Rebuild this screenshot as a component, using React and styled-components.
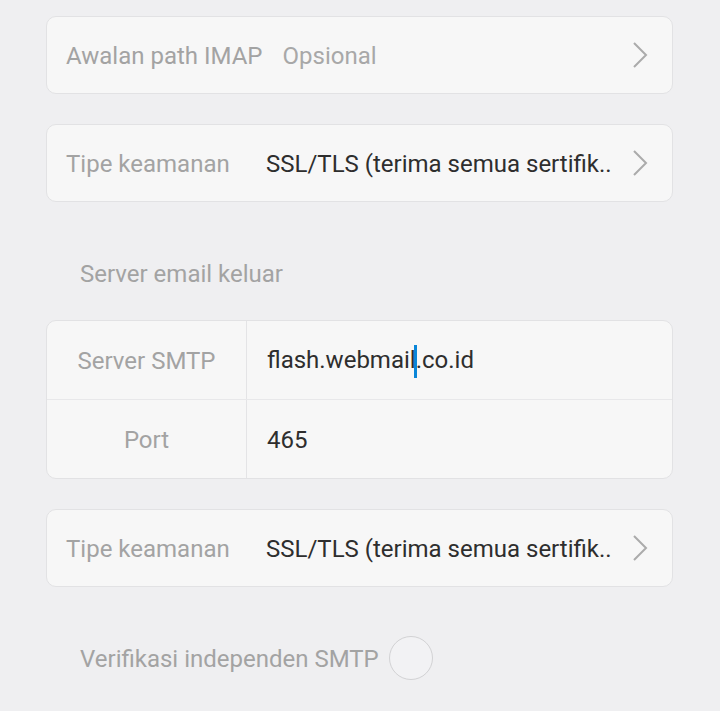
import React from "react";
import styled, { createGlobalStyle } from "styled-components";

const Global = createGlobalStyle`
  body {
    margin: 0;
    background: #efeff1;
    font-family: Roboto, "Liberation Sans", sans-serif;
  }
`;

const Page = styled.div`
  display: flex;
  flex-direction: column;
  padding: 16px 47px 0 46px;
  height: 711px;
  box-sizing: border-box;
  overflow: hidden;
`;

const Card = styled.div`
  background: #f7f7f7;
  border: 1px solid #e2e2e4;
  border-radius: 10px;
  margin-bottom: ${(p) => p.$mb || 0}px;
  overflow: hidden;
`;

const Row = styled.div`
  display: flex;
  align-items: center;
  height: 76px;
  padding: 0 24px 0 19px;
`;

const Label = styled.span`
  font-size: 24px;
  color: #a3a3a3;
  width: ${(p) => (p.$w ? `${p.$w}px` : "auto")};
  flex-shrink: 0;
  padding-top: 2px;
`;

const Placeholder = styled.span`
  font-size: 24px;
  color: #a8a8a8;
  margin-left: 20px;
  padding-top: 2px;
  flex: 1;
`;

const Value = styled.span`
  font-size: 24px;
  color: #2e2e2e;
  flex: 1;
  padding-top: 2px;
  white-space: nowrap;
`;

const Chevron = () => (
  <svg width="16" height="26" viewBox="0 0 16 26">
    <path d="M2 1 L14 13 L2 25" fill="none" stroke="#ababab" strokeWidth="2" />
  </svg>
);

const SectionTitle = styled.div`
  font-size: 24px;
  color: #a3a3a3;
  padding-left: 34px;
  line-height: 30px;
  margin: 57px 0 31px;
`;

const TableRow = styled.div`
  display: grid;
  grid-template-columns: 200px 1fr;
  height: 78px;
  border-top: ${(p) => (p.$first ? "none" : "1px solid #e8e8ea")};
`;

const Cell = styled.div`
  display: flex;
  align-items: center;
  justify-content: ${(p) => (p.$center ? "center" : "flex-start")};
  padding-left: ${(p) => (p.$center ? 0 : 20)}px;
  padding-top: 2px;
  border-right: ${(p) => (p.$center ? "1px solid #e4e4e6" : "none")};
  font-size: 24px;
  color: ${(p) => (p.$center ? "#a3a3a3" : "#2e2e2e")};
`;

const Caret = styled.span`
  display: inline-block;
  width: 3px;
  height: 33px;
  background: #0a86d8;
  vertical-align: middle;
  margin: 0 -1px 0 -2px;
`;

const ToggleRow = styled.div`
  display: flex;
  align-items: center;
  gap: 10px;
  padding-left: 34px;
  margin-top: 49px;
`;

const Radio = styled.div`
  width: 42px;
  height: 42px;
  border-radius: 50%;
  border: 1px solid #d2d2d4;
  background: #f2f2f4;
`;

export default function App() {
  return (
    <>
      <Global />
      <Page>
        <Card $mb={30}>
          <Row>
            <Label>Awalan path IMAP</Label>
            <Placeholder>Opsional</Placeholder>
            <Chevron />
          </Row>
        </Card>
        <Card>
          <Row>
            <Label $w={200}>Tipe keamanan</Label>
            <Value>SSL/TLS (terima semua sertifik..</Value>
            <Chevron />
          </Row>
        </Card>
        <SectionTitle>Server email keluar</SectionTitle>
        <Card $mb={30}>
          <TableRow $first>
            <Cell $center>Server SMTP</Cell>
            <Cell>
              <span>
                flash.webmail<Caret />.co.id
              </span>
            </Cell>
          </TableRow>
          <TableRow>
            <Cell $center>Port</Cell>
            <Cell>465</Cell>
          </TableRow>
        </Card>
        <Card>
          <Row>
            <Label $w={200}>Tipe keamanan</Label>
            <Value>SSL/TLS (terima semua sertifik..</Value>
            <Chevron />
          </Row>
        </Card>
        <ToggleRow>
          <Label>Verifikasi independen SMTP</Label>
          <Radio />
        </ToggleRow>
      </Page>
    </>
  );
}
